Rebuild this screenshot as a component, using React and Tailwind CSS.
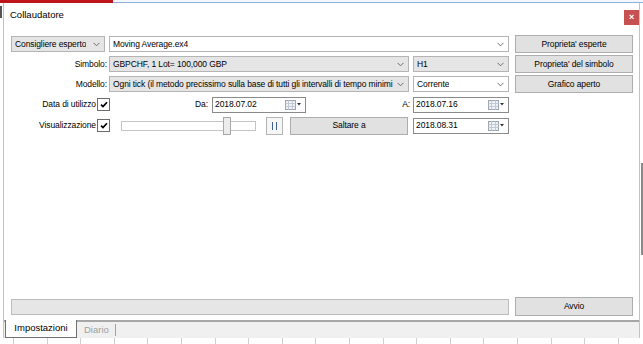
import React from 'react';

function Chevron() {
  return (
    <svg width="7" height="5" viewBox="0 0 7 5" className="shrink-0">
      <polyline points="0.5,0.8 3.5,3.8 6.5,0.8" fill="none" stroke="#6f6f6f" strokeWidth="1" />
    </svg>
  );
}

function Select({ w, gray, children }) {
  return (
    <div
      className={`${w} h-[16px] flex items-center justify-between pl-[3px] pr-[4px] border ${
        gray ? 'bg-[#e5e5e5] border-[#b4b4b4]' : 'bg-white border-[#b4b4b4]'
      }`}
    >
      <span className="whitespace-nowrap overflow-hidden">{children}</span>
      <Chevron />
    </div>
  );
}

function CalIcon() {
  return (
    <svg width="17" height="10" viewBox="0 0 17 10" className="shrink-0">
      <rect x="0.5" y="0.5" width="10" height="9" fill="#eef1f6" stroke="#9aa3b0" />
      <line x1="0.5" y1="3.5" x2="10.5" y2="3.5" stroke="#c4cad4" />
      <line x1="0.5" y1="6.5" x2="10.5" y2="6.5" stroke="#c4cad4" />
      <line x1="3.5" y1="0.5" x2="3.5" y2="9.5" stroke="#c4cad4" />
      <line x1="7.5" y1="0.5" x2="7.5" y2="9.5" stroke="#c4cad4" />
      <polygon points="12,3 16,3 14,5.5" fill="#333" />
    </svg>
  );
}

function DateInput({ w, children }) {
  return (
    <div className={`${w} h-[16px] flex items-center justify-between pl-[2px] pr-[3px] bg-white border border-[#8a8a8a]`}>
      <span>{children}</span>
      <CalIcon />
    </div>
  );
}

function Btn({ w, h = 'h-[18px]', children }) {
  return (
    <div className={`${w} ${h} flex items-center justify-center bg-[#e1e1e1] border border-[#adadad]`}>
      {children}
    </div>
  );
}

function Check() {
  return (
    <div className="w-[13px] h-[13px] flex items-center justify-center bg-white border border-[#6a6a6a]">
      <svg width="8" height="7" viewBox="0 0 8 7">
        <polyline points="1,3.6 3,5.6 7,1.2" fill="none" stroke="#000" strokeWidth="1.7" />
      </svg>
    </div>
  );
}

export default function App() {
  return (
    <div className="w-[643px] h-[344px] overflow-hidden bg-white flex flex-col font-['Liberation_Sans',Arial,sans-serif] text-[8.5px] text-black tracking-[-0.1px]">
      {/* chart behind, top edge */}
      <div className="h-[3px] flex shrink-0">
        <div className="w-[113px] bg-[#c0141c]" />
        <div className="flex-1 bg-[#f3f6fa] border-b border-[#8fb2dd]" />
      </div>

      <div className="flex flex-1 min-h-0">
        <div className="w-[3px] flex flex-col">
          <div className="w-[2px] h-[12px] mt-[3px] bg-[#555]" />
        </div>

        {/* Tester window */}
        <div className="w-[637px] flex flex-col border-x border-[#c3c3c3] bg-white">
          {/* Title bar */}
          <div className="h-[24px] shrink-0 flex items-center justify-between pl-[6px]">
            <span className="text-[9.5px] tracking-normal">Collaudatore</span>
            <div className="w-[15px] h-[15px] mb-[-4px] bg-[#c75050] flex items-center justify-center text-white text-[9px] font-bold leading-none">
              ×
            </div>
          </div>

          {/* Content */}
          <div className="flex-1 min-h-0 flex flex-col pl-[7px] pt-[7px]">
            <div className="flex">
              <div className="w-[498px] flex flex-col">
                <div className="h-[20px] flex items-center">
                  <Select w="w-[94px]" gray>Consigliere esperto</Select>
                  <div className="ml-[4px]">
                    <Select w="w-[400px]">Moving Average.ex4</Select>
                  </div>
                </div>

                <div className="h-[20px] flex items-center">
                  <div className="w-[98px] text-right pr-[2px]">Simbolo:</div>
                  <Select w="w-[300px]" gray>GBPCHF, 1 Lot= 100,000 GBP</Select>
                  <div className="ml-[4px]">
                    <Select w="w-[96px]" gray>H1</Select>
                  </div>
                </div>

                <div className="h-[20px] flex items-center">
                  <div className="w-[98px] text-right pr-[2px]">Modello:</div>
                  <Select w="w-[300px]" gray>
                    Ogni tick (il metodo precissimo sulla base di tutti gli intervalli di tempo minimi
                  </Select>
                  <div className="ml-[4px]">
                    <Select w="w-[96px]">Corrente</Select>
                  </div>
                </div>

                <div className="h-[21px] flex items-center">
                  <div className="w-[86px] text-right pr-[1px]">Data di utilizzo</div>
                  <Check />
                  <div className="w-[98px] text-right">Da:</div>
                  <div className="ml-[4px]">
                    <DateInput w="w-[94px]">2018.07.02</DateInput>
                  </div>
                  <div className="flex-1 text-right pr-[3px]">A:</div>
                  <DateInput w="w-[96px]">2018.07.16</DateInput>
                </div>

                <div className="h-[21px] flex items-center">
                  <div className="w-[86px] text-right pr-[1px]">Visualizzazione</div>
                  <Check />
                  <div className="ml-[11px] w-[135px] h-[10px] relative bg-white border border-[#c4c4c4]">
                    <div className="absolute left-[101px] top-[-5px] w-[8px] h-[18px] bg-[#ececec] border border-[#a8a8a8]" />
                  </div>
                  <div className="ml-[10px] w-[17px] h-[18px] flex items-center justify-center gap-[3px] bg-[#f6f6f6] border border-[#b4b4b4]">
                    <div className="w-[1px] h-[8px] bg-[#3f5f90]" />
                    <div className="w-[1px] h-[8px] bg-[#3f5f90]" />
                  </div>
                  <div className="ml-[7px]">
                    <Btn w="w-[118px]">Saltare a</Btn>
                  </div>
                  <div className="ml-[5px]">
                    <DateInput w="w-[96px]">2018.08.31</DateInput>
                  </div>
                </div>
              </div>

              <div className="ml-[6px] mt-[1px] flex flex-col gap-[2px]">
                <Btn w="w-[118px]">Proprieta' esperte</Btn>
                <Btn w="w-[118px]">Proprieta' del simbolo</Btn>
                <Btn w="w-[118px]">Grafico aperto</Btn>
              </div>
            </div>

            <div className="flex-1" />

            <div className="flex items-center h-[19px] mb-[4px]">
              <div className="w-[498px] h-[16px] bg-[#e6e6e6] border border-[#bcbcbc]" />
              <div className="ml-[6px]">
                <Btn w="w-[118px]" h="h-[19px]">Avvio</Btn>
              </div>
            </div>
          </div>

          {/* Tabs */}
          <div className="h-[18px] shrink-0 flex bg-[#f0f0f0]">
            <div className="w-[1px] border-t-2 border-[#a6a6a6]" />
            <div className="w-[72px] bg-white border-x border-b border-[#707070] flex items-center justify-center text-[9.5px] tracking-normal">
              Impostazioni
            </div>
            <div className="flex-1 border-t-2 border-[#a6a6a6] flex items-center">
              <span className="ml-[7px] text-[#a0a0a0] text-[9.5px] tracking-normal">Diario</span>
              <div className="ml-[6px] w-[1px] h-[12px] bg-[#a0a0a0]" />
            </div>
          </div>
        </div>

        <div className="w-[3px] flex flex-col">
          <div className="mt-[160px] ml-[1px] w-[2px] h-[92px] bg-[#8a8a8a]" />
        </div>
      </div>

      {/* chart behind, bottom edge */}
      <div className="h-[6px] shrink-0 flex pl-[13px] bg-white">
        {Array.from({ length: 19 }).map((_, i) => (
          <div key={i} className="w-[33.6px] shrink-0 h-full border-l border-[#cfcfcf]" />
        ))}
      </div>
    </div>
  );
}
